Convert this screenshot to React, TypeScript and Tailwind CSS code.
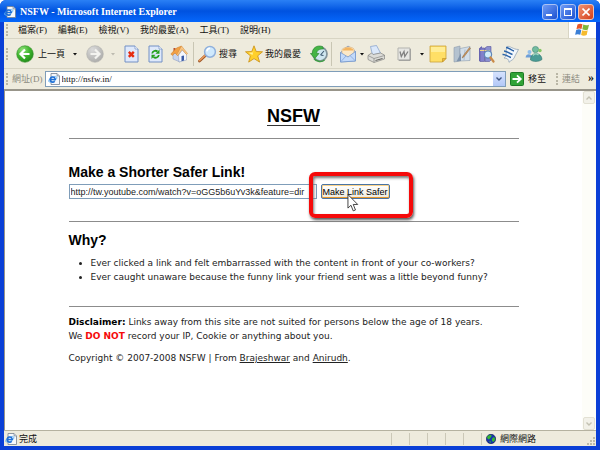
import type { ReactNode } from 'react';

const menuItems = ['檔案(F)', '編輯(E)', '檢視(V)', '我的最愛(A)', '工具(T)', '說明(H)'];

const reasons = [
  'Ever clicked a link and felt embarrassed with the content in front of your co-workers?',
  'Ever caught unaware because the funny link your friend sent was a little beyond funny?',
];

function Grip() {
  return <span className="h-3 w-px shrink-0 border-l-2 border-dotted border-[#b9b6a5]" />;
}

function Separator() {
  return <span className="h-6 w-px shrink-0 bg-[#c9c6b4]" />;
}

function Caret({ color = '#111111' }: { color?: string }) {
  return (
    <svg className="h-1 w-1 shrink-0" viewBox="0 0 4 4" aria-hidden="true">
      <path d="M0 1h4L2 3.5z" fill={color} />
    </svg>
  );
}

function IePageIcon({ className }: { className: string }) {
  return (
    <svg className={className} viewBox="0 0 12 12" aria-hidden="true">
      <path d="M3 .5h6l2.500 2.500v8.500H3z" fill="#f6f8fc" stroke="#75808f" strokeWidth=".8" />
      <path d="M9 .5V3h2.500" fill="#c9d3e0" stroke="#75808f" strokeWidth=".6" />
      <ellipse cx="4.800" cy="6.300" rx="4.700" ry="2" fill="none" stroke="#6cb7f2" strokeWidth=".8" transform="rotate(-28 4.800 6.300)" />
      <path d="M2.300 6.500h5A2.600 2.600 0 1 0 6.700 8.200" fill="none" stroke="#1f6fd6" strokeWidth="1.500" />
    </svg>
  );
}

function BackIcon() {
  return (
    <svg className="h-[18px] w-[18px]" viewBox="0 0 18 18" aria-hidden="true">
      <defs>
        <radialGradient id="back" cx=".35" cy=".25" r=".85">
          <stop offset="0" stopColor="#8fe07a" />
          <stop offset=".5" stopColor="#3fb52e" />
          <stop offset="1" stopColor="#1c8517" />
        </radialGradient>
      </defs>
      <circle cx="9" cy="9" r="8.300" fill="url(#back)" stroke="#3a9130" strokeWidth=".6" />
      <path d="M9 4.500 4.500 9 9 13.500M5 9h8.500" fill="none" stroke="#fff" strokeWidth="2.200" />
    </svg>
  );
}

function ForwardIcon() {
  return (
    <svg className="h-[18px] w-[18px]" viewBox="0 0 18 18" aria-hidden="true">
      <defs>
        <radialGradient id="forward" cx=".35" cy=".25" r=".85">
          <stop offset="0" stopColor="#dadada" />
          <stop offset="1" stopColor="#a9a9a7" />
        </radialGradient>
      </defs>
      <circle cx="9" cy="9" r="8.300" fill="url(#forward)" stroke="#b0b0ad" strokeWidth=".6" />
      <path d="M9 4.500 13.500 9 9 13.500M13 9H4.500" fill="none" stroke="#f3f3f0" strokeWidth="2.200" />
    </svg>
  );
}

function StopIcon() {
  return (
    <svg className="h-[18px] w-[15px]" viewBox="0 0 15 18" aria-hidden="true">
      <path d="M1 1h10l3 3v13H1z" fill="#dfe9fb" stroke="#7290c4" />
      <path d="M11 1v3h3" fill="#fff" stroke="#7290c4" strokeWidth=".7" />
      <path d="m4.800 6.800 5 5M9.800 6.800l-5 5" stroke="#e62c10" strokeWidth="2.400" />
    </svg>
  );
}

function RefreshIcon() {
  return (
    <svg className="h-[18px] w-[15px]" viewBox="0 0 15 18" aria-hidden="true">
      <path d="M1 1h10l3 3v13H1z" fill="#dfe9fb" stroke="#7290c4" />
      <path d="M11 1v3h3" fill="#fff" stroke="#7290c4" strokeWidth=".7" />
      <path d="M4.200 8.500C4.500 6 7.500 5 9.500 6.500" fill="none" stroke="#25a01c" strokeWidth="1.800" />
      <path d="M11.500 4.500v4.300H7.500z" fill="#25a01c" />
      <path d="M10.800 10C10.500 12.500 7.500 13.500 5.500 12" fill="none" stroke="#25a01c" strokeWidth="1.800" />
      <path d="M3.500 14V9.700h4z" fill="#25a01c" />
    </svg>
  );
}

function HomeIcon() {
  return (
    <svg className="h-[18px] w-[18px]" viewBox="0 0 18 18" aria-hidden="true">
      <path d="M3.500 3h2v4h-2z" fill="#b9502c" />
      <path d="M3 9 7 7l3 3v7l-7-3z" fill="#c8d5ee" stroke="#8295bd" strokeWidth=".5" />
      <path d="m8.500 10 4-5 4 4.500V15L9 17z" fill="#f2f6fe" stroke="#8295bd" strokeWidth=".5" />
      <path d="M.8 9 6.500 3 11.500 1 7.500 10.500 5 8 2.300 10.500z" fill="#f2a045" stroke="#cc7825" strokeWidth=".5" />
      <path d="m11.500 1 6 7.500-1 1-4.500-5-4.300 6.300-1-1z" fill="#fac886" stroke="#d28a3b" strokeWidth=".5" />
      <path d="m11.500 11 2.500-.5v5l-2.500.7z" fill="#3a5aa5" />
    </svg>
  );
}

function SearchIcon() {
  return (
    <svg className="h-[18px] w-[19px]" viewBox="0 0 19 18" aria-hidden="true">
      <path d="m1.500 16 6-5.500" stroke="#a15a2b" strokeWidth="2.800" strokeLinecap="round" />
      <path d="m1.500 15.500 6-5.500" stroke="#eb9a5a" strokeWidth="1.600" strokeLinecap="round" />
      <circle cx="12" cy="6.800" r="5.400" fill="#cfe9fd" stroke="#8fb0dc" strokeWidth="1.500" />
      <path d="M8.800 6.300A3.600 3.600 0 0 1 12 3.300" fill="none" stroke="#fff" strokeWidth="1.600" />
    </svg>
  );
}

function StarIcon() {
  return (
    <svg className="h-[18px] w-[18px]" viewBox="0 0 18 18" aria-hidden="true">
      <path d="m9 .8 2.200 5.700 6.300.3-4.800 4 1.900 6.300L9 13.600l-5.300 3.500 1.700-6.300-4.900-4 6.300-.3z" fill="#ffd02a" stroke="#cf9720" strokeWidth=".9" strokeLinejoin="round" />
      <path d="m9 3.200-1.200 4.200-4.300.3L7.500 10z" fill="#fff29a" />
    </svg>
  );
}

function HistoryIcon() {
  return (
    <svg className="h-[18px] w-[18px]" viewBox="0 0 18 18" aria-hidden="true">
      <circle cx="10" cy="9" r="7" fill="#cfe6ef" stroke="#82939b" strokeWidth="1.700" />
      <path d="M10.500 10 14 6M10.500 10l3 .5" stroke="#3c5870" strokeWidth="1.100" />
      <path d="M12.500 1.500C6.500-.5 2 3.500 2.300 8.500H.4l4.400 5 4.200-5H6.800C6.500 5.500 9.500 3.800 13.500 4z" fill="#45b545" stroke="#24812a" strokeWidth=".6" />
      <path d="M4 13.500C6.500 17.200 12 17.300 14.500 15" fill="none" stroke="#3f9c46" strokeWidth="1.600" />
    </svg>
  );
}

function MailIcon() {
  return (
    <svg className="h-[18px] w-[18px]" viewBox="0 0 18 18" aria-hidden="true">
      <path d="M1.500 7.500 9 1l7.500 5.500V16l-15 1z" fill="#a9c9f3" stroke="#6f92c9" strokeWidth=".7" />
      <path d="M3 4.500C6 1.500 12 1 15 4v6l-6 2-6-2z" fill="#fce8c6" stroke="#d9a869" strokeWidth=".6" />
      <path d="M4 4.500C7 2 11 2 14 4.300v1.200H4z" fill="#f4b45f" />
      <path d="M1.500 7.500 9 12l7.500-5.500V16l-15 1z" fill="#c3dafa" stroke="#6f92c9" strokeWidth=".7" />
      <path d="m1.500 17 5.500-6M16.500 16 11 10.500" stroke="#7d9fd3" strokeWidth=".7" />
    </svg>
  );
}

function PrintIcon() {
  return (
    <svg className="h-[18px] w-[18px]" viewBox="0 0 18 18" aria-hidden="true">
      <path d="m3.500 1.500 6-1 4 7.500-8 2z" fill="#dbe8fa" stroke="#7f9cc8" strokeWidth=".7" />
      <path d="M1 10.500 4.500 8l1.500 1.500 7.500-1.500 4 2v4L7 17.500 1 14.500z" fill="#dcdcd8" stroke="#858582" strokeWidth=".7" />
      <path d="m1 10.500 6 3 10.500-3M7 13.500v4" fill="none" stroke="#858582" strokeWidth=".7" />
      <path d="m8.500 15.500 7-2" stroke="#63635f" strokeWidth="1" />
    </svg>
  );
}

function WordIcon() {
  return (
    <svg className="h-[14px] w-[14px]" viewBox="0 0 14 14" aria-hidden="true">
      <path d="M1 1h12v12H1z" fill="#e6e6e3" stroke="#b3b3af" />
      <path d="M13.300 2v11.300H2" fill="none" stroke="#8b8b8b" strokeWidth=".8" />
      <path d="m3 4.500 1.300 5L7 4.500l.8 5 3.200-5" fill="none" stroke="#808080" strokeWidth="1.300" />
    </svg>
  );
}

function NoteIcon() {
  return (
    <svg className="h-[18px] w-[18px]" viewBox="0 0 18 18" aria-hidden="true">
      <path d="M1 1h16v12.500L13.500 17H1z" fill="#ffdf66" stroke="#c9a13c" strokeWidth=".8" />
      <path d="M2 2h14v5H2z" fill="#ffed96" />
      <path d="M17 13.500h-3.500V17z" fill="#f2b93b" stroke="#b98d25" strokeWidth=".6" />
    </svg>
  );
}

function JournalIcon() {
  return (
    <svg className="h-[18px] w-[18px]" viewBox="0 0 18 18" aria-hidden="true">
      <path d="M1 2.500 7 1v15l-6 1z" fill="#b4c2cf" stroke="#8d9bab" strokeWidth=".6" />
      <path d="M7 3.500 17 1.500V15.500L7 16z" fill="#d3dfe9" stroke="#8c9bac" strokeWidth=".6" />
      <path d="M3.500 16.500 8 8v8z" fill="#7e93ac" />
      <path d="M12 4.500 11 15" stroke="#a4b5c6" strokeWidth=".8" />
      <path d="m10 11 6.500-8.500 1 .8-6.300 8.200-2 1.500z" fill="#d39a5a" stroke="#87613b" strokeWidth=".5" />
    </svg>
  );
}

function ResearchIcon() {
  return (
    <svg className="h-[18px] w-[18px]" viewBox="0 0 18 18" aria-hidden="true">
      <path d="m2 3.500 3-2.500v13l-3 2.500z" fill="#6e6cba" />
      <path d="M3 3h4.500v13.500H3z" fill="#8280cb" stroke="#57559c" strokeWidth=".6" />
      <path d="m8 3 2-1.500H14V15l-1.500 1.500H8z" fill="#8b8fd0" stroke="#57559c" strokeWidth=".6" />
      <path d="M3 5.500h4.500M8 5.500h5" stroke="#f2d384" strokeWidth="1" />
      <circle cx="11" cy="9.500" r="3.600" fill="#cfe9fb" stroke="#5f87b8" strokeWidth="1.200" />
      <path d="m13.500 12.500 3 4" stroke="#c98a48" strokeWidth="2.200" strokeLinecap="round" />
    </svg>
  );
}

function ScrollIcon() {
  return (
    <svg className="h-[18px] w-[18px]" viewBox="0 0 18 18" aria-hidden="true">
      <path d="M6 1.500C9 .5 12 4.500 17.500 4.500L14 11c-1 4-4 4-6 6.300 0-3-2-4.300-5-4.300 4-2 1-6 3-11.500z" fill="#f3f7fb" stroke="#93a4b6" strokeWidth=".8" />
      <path d="M5 2.500c3 0 5 3 8 3.500M3 6c3 0 5 2.500 8.500 3.500M1.500 9.500c3-.5 5 2 8.500 3" fill="none" stroke="#2c64a8" strokeWidth="1.500" />
    </svg>
  );
}

function MessengerIcon() {
  return (
    <svg className="h-[18px] w-[18px]" viewBox="0 0 18 18" aria-hidden="true">
      <circle cx="4.500" cy="7" r="2" fill="#8fbdea" />
      <path d="M.6 12.500c0-4.500 6-4.500 7 0z" fill="#6c9ed8" />
      <circle cx="10.500" cy="4.500" r="3.100" fill="#74bca0" stroke="#3c8577" strokeWidth=".6" />
      <path d="M5.500 15c-.5-8.500 11-8.500 11.500-.5-3 2.500-9 2.500-11.500.5z" fill="#4b9c96" stroke="#32756e" strokeWidth=".6" />
      <path d="M8 10.500c1.500-2 4-2 5.500-.5" fill="none" stroke="#a6dbc4" strokeWidth="1.300" />
      <circle cx="15" cy="5.500" r="1.700" fill="#86c765" />
    </svg>
  );
}

function WindowsFlag() {
  return (
    <svg className="h-[14px] w-[15px]" viewBox="0 0 15 14" aria-hidden="true">
      <path d="M2.500 1.500Q5 0 7.500 1.300L6.500 6Q4 5 1.400 6.200z" fill="#e5582b" />
      <path d="M8.300 1.600Q11 3 14 1.800L12.900 6.500Q10 7.600 7.300 6.300z" fill="#7cb83c" />
      <path d="M1.200 7Q3.800 5.800 6.300 6.900L5.300 11.800Q2.800 10.600.1 11.800z" fill="#3b7fd6" />
      <path d="M7.100 7.200Q10 8.400 12.700 7.300L11.700 12Q8.800 13.300 6.100 12.100z" fill="#f5bb2e" />
    </svg>
  );
}

function GlobeIcon() {
  return (
    <svg className="h-[10px] w-[10px]" viewBox="0 0 10 10" aria-hidden="true">
      <circle cx="5" cy="5" r="4.700" fill="#1633b0" stroke="#0b1646" strokeWidth=".6" />
      <path d="M1 3.500C2 1 5 .5 5.500 1.500S4 4 3.500 5 1.500 5 1 3.500zM6.500 4c1-1.500 2.500-1 2.500 1S7.500 8.500 6.500 7.500 5.500 5.500 6.500 4zM3 7l2 .5-.5 1.500z" fill="#36b92f" />
    </svg>
  );
}

function ToolButton({ label, children }: { label: string; children: ReactNode }) {
  return (
    <button type="button" aria-label={label} className="flex h-6 w-6 shrink-0 items-center justify-center">
      {children}
    </button>
  );
}

function TitleBar() {
  return (
    <header className="flex h-[22px] shrink-0 items-center justify-between bg-linear-to-b from-[#2a80f5] via-[#0052e0] to-[#0667fb] pt-0.5 pr-1.5 pl-1">
      <div className="flex items-center gap-1">
        <IePageIcon className="h-3 w-3" />
        <h1 className="text-[10px] leading-3 font-bold text-white">NSFW - Microsoft Internet Explorer</h1>
      </div>
      <div className="flex gap-0.5">
        <button type="button" aria-label="Minimize" className="flex h-4 w-4 items-end rounded-[3px] border border-[#a9c2f5] bg-linear-to-br from-[#6f9bf5] to-[#1c4fd0] p-[3px]">
          <span className="h-0.5 w-1.5 bg-white" />
        </button>
        <button type="button" aria-label="Maximize" className="flex h-4 w-4 items-center justify-center rounded-[3px] border border-[#a9c2f5] bg-linear-to-br from-[#6f9bf5] to-[#1c4fd0]">
          <span className="h-2 w-2 border border-t-2 border-white" />
        </button>
        <button type="button" aria-label="Close" className="flex h-4 w-4 items-center justify-center rounded-[3px] border border-[#f0c3b6] bg-linear-to-br from-[#f0906f] to-[#d33c12]">
          <svg className="h-2 w-2" viewBox="0 0 8 8" aria-hidden="true">
            <path d="m.5.5 7 7M7.500.5l-7 7" stroke="#fff" strokeWidth="1.600" />
          </svg>
        </button>
      </div>
    </header>
  );
}

function MenuBar() {
  return (
    <nav className="flex h-[17px] shrink-0 items-center justify-between border-b border-[#d8d5c4] pl-0.5">
      <div className="flex items-center gap-2.5">
        <Grip />
        <div className="flex items-center gap-[11px]">
          {menuItems.map((item) => (
            <button key={item} type="button" className="leading-3">
              {item}
            </button>
          ))}
        </div>
      </div>
      <div className="flex h-4 w-7 items-center justify-center border-l border-[#d8d5c4] bg-white">
        <WindowsFlag />
      </div>
    </nav>
  );
}

function ToolBar() {
  return (
    <div className="flex h-[30px] shrink-0 items-center border-b border-[#d8d5c4] pl-0.5">
      <Grip />
      <button type="button" className="ml-2 flex items-center gap-1">
        <BackIcon />
        上一頁
      </button>
      <div className="ml-2 flex items-center gap-1.5">
        <Caret />
        <ToolButton label="下一頁"><ForwardIcon /></ToolButton>
      </div>
      <div className="ml-1 flex items-center gap-1">
        <Caret color="#bdbbb0" />
        <ToolButton label="停止"><StopIcon /></ToolButton>
      </div>
      <ToolButton label="重新整理"><RefreshIcon /></ToolButton>
      <ToolButton label="首頁"><HomeIcon /></ToolButton>
      <span className="ml-0.5 flex"><Separator /></span>
      <button type="button" className="ml-1 flex items-center gap-0.5">
        <SearchIcon />
        搜尋
      </button>
      <button type="button" className="ml-2 flex items-center gap-0.5">
        <StarIcon />
        我的最愛
      </button>
      <span className="ml-1.5">
        <ToolButton label="記錄"><HistoryIcon /></ToolButton>
      </span>
      <Separator />
      <div className="ml-1 flex items-center">
        <ToolButton label="郵件"><MailIcon /></ToolButton>
        <Caret />
      </div>
      <ToolButton label="列印"><PrintIcon /></ToolButton>
      <div className="mr-0.5 ml-1 flex items-center gap-1">
        <ToolButton label="編輯"><WordIcon /></ToolButton>
        <Caret />
      </div>
      <ToolButton label="備註"><NoteIcon /></ToolButton>
      <ToolButton label="日誌"><JournalIcon /></ToolButton>
      <ToolButton label="參考資料"><ResearchIcon /></ToolButton>
      <ToolButton label="文件"><ScrollIcon /></ToolButton>
      <ToolButton label="Messenger"><MessengerIcon /></ToolButton>
    </div>
  );
}

function AddressBar() {
  return (
    <form className="flex h-5 shrink-0 items-center pl-0.5" onSubmit={(e) => e.preventDefault()}>
      <Grip />
      <label htmlFor="address" className="ml-1 shrink-0 text-[#8c8a7e]">網址(D)</label>
      <div className="ml-0.5 flex h-4 min-w-0 flex-1 items-center border border-[#7f9db9] bg-white pl-0.5">
        <IePageIcon className="h-3 w-3 shrink-0" />
        <input id="address" type="text" defaultValue="http://nsfw.in/" className="ml-0.5 min-w-0 flex-1 leading-3 outline-none" />
        <button type="button" aria-label="網址清單" className="flex h-3.5 w-3 items-center justify-center bg-linear-to-b from-[#d6e2fd] to-[#b3c8f7]">
          <svg className="h-1.5 w-1.5" viewBox="0 0 6 6" aria-hidden="true">
            <path d="m.5 1.500 2.500 2.500L5.500 1.500" fill="none" stroke="#3f5583" strokeWidth="1.400" />
          </svg>
        </button>
      </div>
      <button type="submit" className="ml-1 flex shrink-0 items-center gap-1">
        <svg className="h-3.5 w-3.5" viewBox="0 0 14 14" aria-hidden="true">
          <rect x=".5" y=".5" width="13" height="13" rx="1" fill="#31a336" stroke="#1c7a25" />
          <path d="M2.500 7h8M7 3.300 10.800 7 7 10.700" fill="none" stroke="#fff" strokeWidth="1.800" />
        </svg>
        移至
      </button>
      <span className="mr-0.5 ml-2.5 flex shrink-0 items-center gap-1">
        <Grip />
        <span className="text-[#8c8a7e]">連結</span>
        <span className="ml-1 pb-1 text-xs leading-3 font-bold">»</span>
      </span>
    </form>
  );
}

function Cursor() {
  return (
    <svg className="absolute top-2.5 left-[26px] h-[18px] w-3" viewBox="0 0 10 16" aria-hidden="true">
      <path d="M.5.500v12l2.700-2.500 2 5 2-.8-2-4.900h4z" fill="#fff" stroke="#333" strokeWidth=".8" />
    </svg>
  );
}

function Page() {
  return (
    <main className="min-w-0 flex-1 overflow-hidden font-['DejaVu_Sans','Liberation_Sans',sans-serif] text-[9px] leading-[14px] text-[#222222]">
      <div className="mx-auto max-w-[450px] pt-4">
        <div className="border-b border-[#8c8c8c] pb-3 text-center font-['Liberation_Sans',sans-serif]">
          <a href="#home" className="inline-block border-b border-[#333333] text-lg leading-[18px] font-bold text-black">NSFW</a>
        </div>

        <form className="border-b border-[#8c8c8c] pt-6 pb-[22px] font-['Liberation_Sans',sans-serif]" onSubmit={(e) => e.preventDefault()}>
          <h2 className="text-sm leading-[18px] font-bold text-black">
            <label htmlFor="link">Make a Shorter Safer Link!</label>
          </h2>
          <div className="mt-[3px] flex gap-1">
            <input
              id="link"
              type="text"
              defaultValue="http://tw.youtube.com/watch?v=oGG5b6uYv3k&feature=dir"
              className="h-[15px] w-[248px] border border-[#7f9db9] bg-white px-px text-[9px] leading-3 outline-none"
            />
            <div className="relative">
              <button type="submit" className="h-[15px] rounded-[2px] border border-[#4a74a3] bg-linear-to-b from-white to-[#eeeade] px-px text-[9px] leading-3 whitespace-nowrap text-black shadow-[inset_0_-1px_0_#e5972d,inset_0_0_0_1px_#fbd38a]">
                Make Link Safer
              </button>
              <span className="pointer-events-none absolute -top-3 -left-3 h-[46px] w-[104px] rounded-md border-4 border-[#f50a0a] shadow-[1px_2px_3px_#555555,inset_1px_2px_3px_#777777]" />
              <Cursor />
            </div>
          </div>
        </form>

        <section className="border-b border-[#8c8c8c] pt-2 pb-[22px]">
          <h2 className="font-['Liberation_Sans',sans-serif] text-sm leading-5 font-bold text-black">Why?</h2>
          <ul className="mt-1.5 list-disc pl-[22px]">
            {reasons.map((reason) => (
              <li key={reason}>{reason}</li>
            ))}
          </ul>
        </section>

        <p className="pt-2">
          <strong className="text-black">Disclaimer:</strong> Links away from this site are not suited for persons below the age of 18 years.
          <br />
          We <strong className="text-[#f50a0a]">DO NOT</strong> record your IP, Cookie or anything about you.
        </p>
        <p className="pt-2">
          Copyright © 2007-2008 NSFW | From <a href="#brajeshwar" className="underline">Brajeshwar</a> and{' '}
          <a href="#anirudh" className="underline">Anirudh</a>.
        </p>
      </div>
    </main>
  );
}

function ScrollButton({ label, path }: { label: string; path: string }) {
  return (
    <button type="button" aria-label={label} className="flex h-[13px] w-3 items-center justify-center rounded-[2px] border border-[#e2e0d3] bg-[#f2f1e9]">
      <svg className="h-1.5 w-1.5" viewBox="0 0 6 6" aria-hidden="true">
        <path d={path} fill="none" stroke="#c3c1b2" strokeWidth="1.400" />
      </svg>
    </button>
  );
}

function StatusBar() {
  return (
    <footer className="flex h-4 shrink-0 items-center justify-between border-t border-[#b5b2a0] pl-px">
      <div className="flex items-center gap-0.5">
        <IePageIcon className="h-3 w-3" />
        完成
      </div>
      <div className="flex h-full items-center">
        {[0, 1, 2, 3, 4].map((pane) => (
          <span key={pane} className="h-3 w-[18px] border-l border-[#cbc8b7]" />
        ))}
        <div className="flex h-3 w-[105px] items-center gap-1 border-l border-[#cbc8b7] pl-1">
          <GlobeIcon />
          網際網路
        </div>
        <svg className="h-2.5 w-2.5 self-end" viewBox="0 0 10 10" aria-hidden="true">
          <path d="M7 1h2v2H7zM4 4h2v2H4zM7 4h2v2H7zM1 7h2v2H1zM4 7h2v2H4zM7 7h2v2H7z" fill="#bdbaa9" />
        </svg>
      </div>
    </footer>
  );
}

export default function App() {
  return (
    <div className="flex h-screen flex-col overflow-hidden rounded-t-md bg-[#0a3fd6] font-['Liberation_Serif','Noto_Sans_CJK_TC',serif] text-[9px] leading-3 text-[#111111]">
      <TitleBar />
      <div className="mx-1 mb-1 flex min-h-0 flex-1 flex-col bg-[#eeebdd]">
        <MenuBar />
        <ToolBar />
        <AddressBar />
        <div className="flex min-h-0 flex-1 border-t-2 border-l border-[#98958a] bg-white">
          <Page />
          <div className="flex w-[14px] shrink-0 flex-col items-center justify-between bg-[#fdfdf8]">
            <ScrollButton label="Scroll up" path="m.5 4.500 2.500-2.500L5.500 4.500" />
            <ScrollButton label="Scroll down" path="m.5 1.500 2.500 2.500L5.500 1.500" />
          </div>
        </div>
        <StatusBar />
      </div>
    </div>
  );
}
